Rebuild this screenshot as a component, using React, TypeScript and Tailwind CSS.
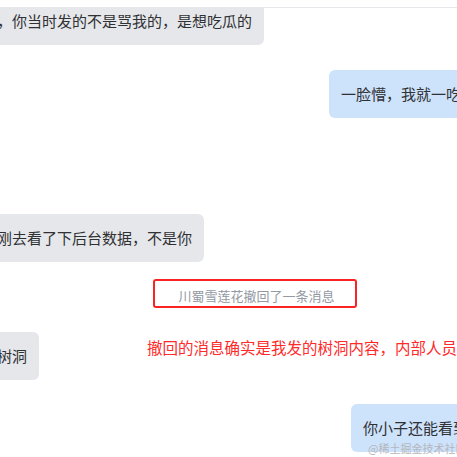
type Msg = { side: 'left' | 'right'; text: string }

const Bubble = ({ side, text }: Msg) => {
  return (
    <div
      className={`whitespace-nowrap rounded-md px-3 py-3 text-[15px] leading-6 text-[#303133] ${
        side === 'left' ? 'bg-[#e5e7eb]' : 'bg-[#cde2fb]'
      }`}
    >
      {text}
    </div>
  )
}

const Row = ({ side, text, className = '' }: Msg & { className?: string }) => {
  return (
    <div className={`flex ${side === 'left' ? 'justify-start' : 'justify-end'} ${className}`}>
      <Bubble side={side} text={text} />
    </div>
  )
}

export default function App() {
  return (
    <div
      className="relative h-[457px] w-[457px] overflow-hidden bg-white"
      style={{ fontFamily: "'Noto Sans CJK SC', 'Microsoft YaHei', sans-serif" }}
    >
      <div className="h-[7px] bg-white" />
      <div className="h-[450px] overflow-hidden border-t border-[#e5e7eb]">
        <div className="-ml-[45px] w-[600px]">
          <Row side="left" text="原来，你当时发的不是骂我的，是想吃瓜的" className="-mt-[11px]" />
          <Row side="right" text="一脸懵，我就一吃瓜的群众啊?" className="mt-[25px]" />
          <Row side="left" text="我刚刚去看了下后台数据，不是你" className="mt-[96px]" />

          <div className="mt-[17px] flex justify-center">
            <div className="rounded-[3px] border-2 border-[#fa2424] pb-[1px] pl-[23px] pr-[20px] pt-[6px] text-[13px] leading-[18px] text-[#9499a3]">
              川蜀雪莲花撤回了一条消息
            </div>
          </div>

          <div className="mt-[24px] flex items-start">
            <Bubble side="left" text="当成树洞" />
            <p className="ml-[108px] mt-[3px] whitespace-nowrap text-[15.5px] leading-6 text-[#ff2a2a]">
              撤回的消息确实是我发的树洞内容，内部人员可以看到
            </p>
          </div>

          <Row side="right" text="你小子还能看到撤回的消息" className="mt-[24px]" />
        </div>
      </div>

      <div className="absolute bottom-[2px] left-[368px] whitespace-nowrap text-[11px] leading-[14px] text-[#b4b7bd]">
        @稀土掘金技术社区
      </div>
    </div>
  )
}
